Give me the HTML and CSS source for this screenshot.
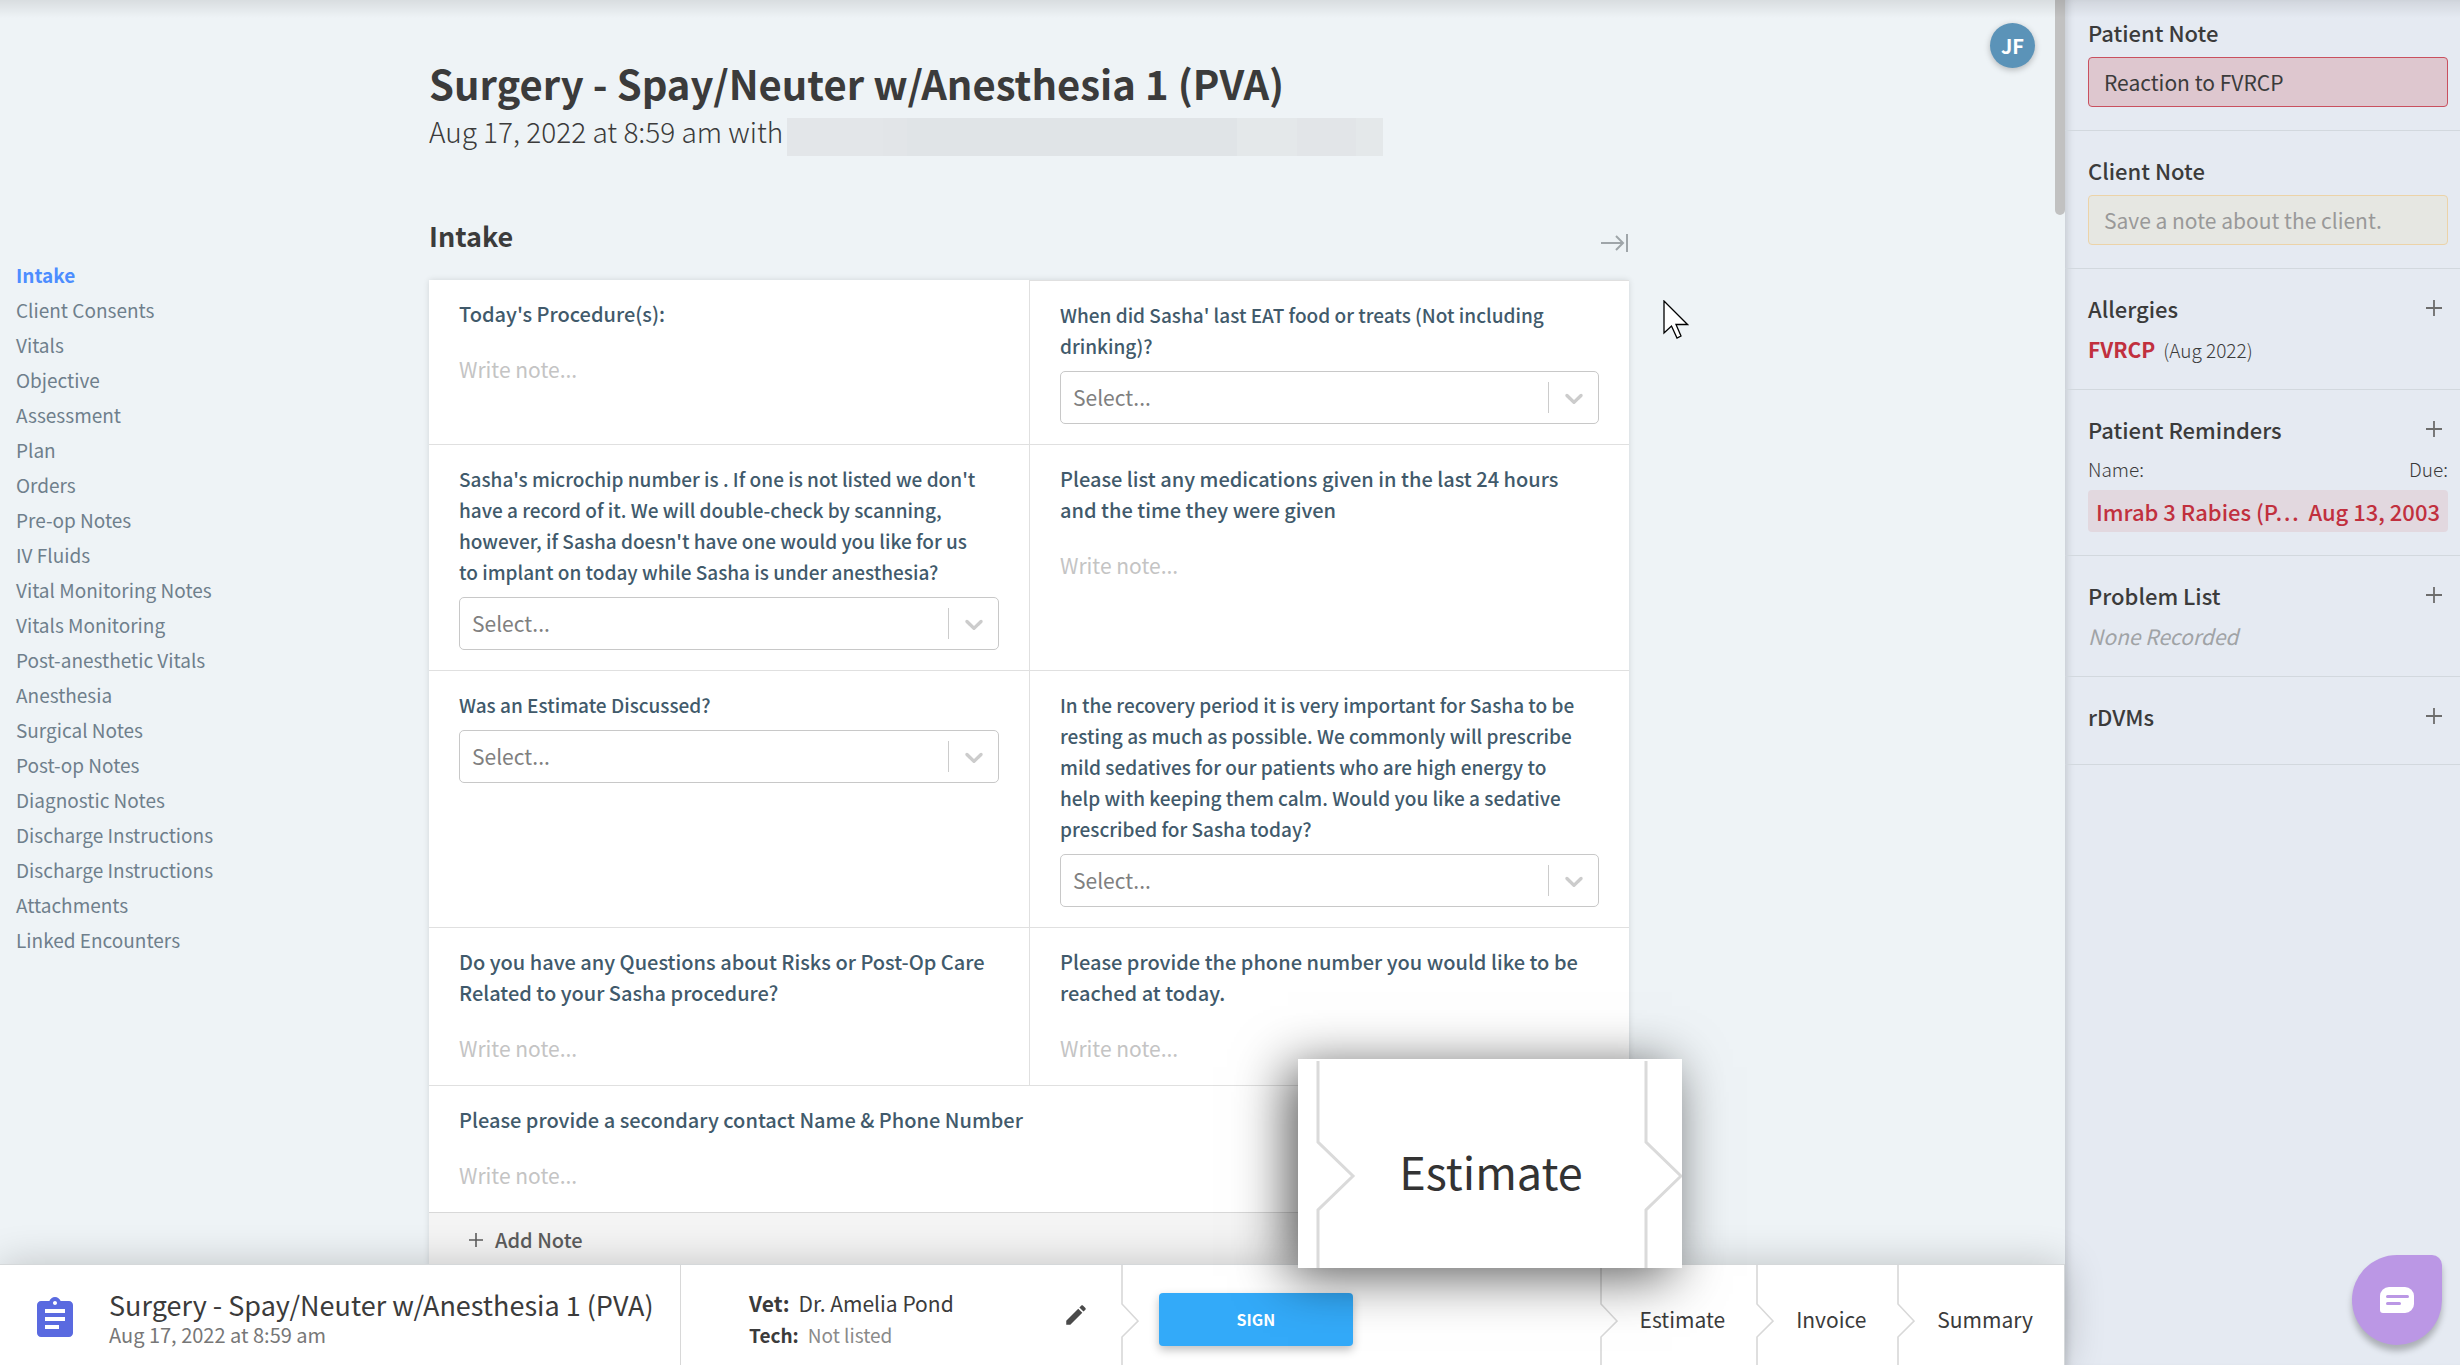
FILE: index.html
```html
<!DOCTYPE html>
<html lang="en">
  <head>
    <meta charset="UTF-8" />
    <meta name="viewport" content="width=device-width, initial-scale=1.0" />
    <title>Surgery - Spay/Neuter w/Anesthesia 1 (PVA)</title>
    <link rel="stylesheet" href="styles.css">
  </head>
  <body>
    <!-- shared icons -->
    <svg class="sprite" aria-hidden="true">
      <symbol id="plus" viewBox="0 0 16 16"><path d="M8 0V16M0 8H16" stroke="currentColor" stroke-width="1.8" /></symbol>
      <symbol id="chevron" viewBox="0 0 20 20"><path d="M4.516 7.548c.436-.446 1.043-.481 1.576 0L10 11.295l3.908-3.747c.533-.481 1.141-.446 1.574 0 .436.445.408 1.197 0 1.615-.406.418-4.695 4.502-4.695 4.502a1.095 1.095 0 0 1-1.576 0S4.924 9.581 4.516 9.163s-.436-1.17 0-1.615z" fill="currentColor" /></symbol>
      <symbol id="step" viewBox="0 0 18 100"><path d="M1 0V39L17 56L1 72V100" fill="none" stroke="currentColor" stroke-width="1.6" /></symbol>
    </svg>

    <div class="workspace">
      <div class="content">
        <nav class="sections">
          <a class="active" href="#intake">Intake</a>
          <a href="#">Client Consents</a>
          <a href="#">Vitals</a>
          <a href="#">Objective</a>
          <a href="#">Assessment</a>
          <a href="#">Plan</a>
          <a href="#">Orders</a>
          <a href="#">Pre-op Notes</a>
          <a href="#">IV Fluids</a>
          <a href="#">Vital Monitoring Notes</a>
          <a href="#">Vitals Monitoring</a>
          <a href="#">Post-anesthetic Vitals</a>
          <a href="#">Anesthesia</a>
          <a href="#">Surgical Notes</a>
          <a href="#">Post-op Notes</a>
          <a href="#">Diagnostic Notes</a>
          <a href="#">Discharge Instructions</a>
          <a href="#">Discharge Instructions</a>
          <a href="#">Attachments</a>
          <a href="#">Linked Encounters</a>
        </nav>

        <main class="encounter">
          <h1>Surgery - Spay/Neuter w/Anesthesia 1 (PVA)</h1>
          <p class="subtitle">Aug 17, 2022 at 8:59 am with <span class="redacted"></span></p>

          <div class="section-head">
            <h2 id="intake">Intake</h2>
            <button class="icon-btn collapse" aria-label="Collapse">
              <svg width="28" height="18" viewBox="0 0 28 18"><path d="M0 9H22M15 2L22 9L15 16M26 0V18" fill="none" stroke="currentColor" stroke-width="2" /></svg>
            </button>
          </div>

          <div class="card">
            <div class="cell">
              <label for="q1">Today's Procedure(s):</label>
              <textarea id="q1" rows="1" placeholder="Write note..."></textarea>
            </div>
            <div class="cell choice">
              <label for="q2">When did Sasha' last EAT food or treats (Not including drinking)?</label>
              <div class="select">
                <select id="q2"><option>Select...</option></select>
                <span class="arrow"><svg width="30" height="30"><use href="#chevron" /></svg></span>
              </div>
            </div>
            <div class="cell choice">
              <label for="q3">Sasha's microchip number is . If one is not listed we don't have a record of it. We will double-check by scanning, however, if Sasha doesn't have one would you like for us to implant on today while Sasha is under anesthesia?</label>
              <div class="select">
                <select id="q3"><option>Select...</option></select>
                <span class="arrow"><svg width="30" height="30"><use href="#chevron" /></svg></span>
              </div>
            </div>
            <div class="cell">
              <label for="q4">Please list any medications given in the last 24 hours and the time they were given</label>
              <textarea id="q4" rows="1" placeholder="Write note..."></textarea>
            </div>
            <div class="cell choice">
              <label for="q5">Was an Estimate Discussed?</label>
              <div class="select">
                <select id="q5"><option>Select...</option></select>
                <span class="arrow"><svg width="30" height="30"><use href="#chevron" /></svg></span>
              </div>
            </div>
            <div class="cell choice">
              <label for="q6">In the recovery period it is very important for Sasha to be resting as much as possible. We commonly will prescribe mild sedatives for our patients who are high energy to help with keeping them calm. Would you like a sedative prescribed for Sasha today?</label>
              <div class="select">
                <select id="q6"><option>Select...</option></select>
                <span class="arrow"><svg width="30" height="30"><use href="#chevron" /></svg></span>
              </div>
            </div>
            <div class="cell">
              <label for="q7">Do you have any Questions about Risks or Post-Op Care Related to your Sasha procedure?</label>
              <textarea id="q7" rows="1" placeholder="Write note..."></textarea>
            </div>
            <div class="cell">
              <label for="q8">Please provide the phone number you would like to be reached at today.</label>
              <textarea id="q8" rows="1" placeholder="Write note..."></textarea>
            </div>
            <div class="cell wide">
              <label for="q9">Please provide a secondary contact Name &amp; Phone Number</label>
              <textarea id="q9" rows="1" placeholder="Write note..."></textarea>
            </div>
            <button class="add-note"><svg width="14" height="14"><use href="#plus" /></svg>Add Note</button>
          </div>
        </main>

        <button class="avatar">JF</button>
        <div class="scroll-thumb"></div>
        <svg class="cursor" width="26" height="40" viewBox="0 0 26 40"><path d="M1 1V33L8.500 26L14 38L18 36L13 24.500H24.500Z" fill="#fff" stroke="#000" stroke-width="1.300" /></svg>
      </div>

      <footer class="bar">
        <div class="summary">
          <svg class="clipboard" width="48" height="48" viewBox="0 0 24 24"><path fill="currentColor" d="M19 3h-4.180C14.400 1.840 13.300 1 12 1c-1.300 0-2.400.84-2.820 2H5c-1.100 0-2 .9-2 2v14c0 1.100.9 2 2 2h14c1.100 0 2-.9 2-2V5c0-1.100-.9-2-2-2zm-7 0c.55 0 1 .45 1 1s-.45 1-1 1-1-.45-1-1 .45-1 1-1zm2 14H7v-2h7v2zm3-4H7v-2h10v2zm0-4H7V7h10v2z" /></svg>
          <div>
            <p class="summary-title">Surgery - Spay/Neuter w/Anesthesia 1 (PVA)</p>
            <p class="summary-date">Aug 17, 2022 at 8:59 am</p>
          </div>
        </div>
        <div class="staff">
          <dl>
            <div><dt>Vet:</dt><dd>Dr. Amelia Pond</dd></div>
            <div class="tech"><dt>Tech:</dt><dd>Not listed</dd></div>
          </dl>
          <button class="icon-btn edit" aria-label="Edit staff">
            <svg width="26" height="26" viewBox="0 0 24 24"><path fill="currentColor" d="M3 17.250V21h3.750L17.810 9.940l-3.750-3.750L3 17.250zM20.710 7.040c.39-.39.39-1.020 0-1.410l-2.340-2.340c-.39-.39-1.020-.39-1.410 0l-1.830 1.830 3.750 3.750 1.830-1.830z" /></svg>
          </button>
        </div>
        <div class="sign">
          <svg class="step" width="18" height="100"><use href="#step" /></svg>
          <button class="sign-btn">SIGN</button>
        </div>
        <nav class="tabs">
          <a href="#"><svg class="step" width="18" height="100"><use href="#step" /></svg><span>Estimate</span></a>
          <a href="#"><svg class="step" width="18" height="100"><use href="#step" /></svg><span>Invoice</span></a>
          <a href="#"><svg class="step" width="18" height="100"><use href="#step" /></svg><span>Summary</span></a>
        </nav>
      </footer>

      <div class="callout">
        <svg width="40" height="209" viewBox="0 0 40 209"><path d="M2 2V83L37 117L2 151V209" fill="none" stroke="currentColor" stroke-width="3" /></svg>
        <span>Estimate</span>
        <svg width="38" height="209" viewBox="0 0 38 209"><path d="M2 2V83L37 117L2 151V209" fill="none" stroke="currentColor" stroke-width="3" /></svg>
      </div>
    </div>

    <aside class="sidebar">
      <section>
        <div class="side-head"><h3><label for="patient-note">Patient Note</label></h3></div>
        <input class="alert" id="patient-note" type="text" value="Reaction to FVRCP">
      </section>
      <section>
        <div class="side-head"><h3><label for="client-note">Client Note</label></h3></div>
        <input class="note" id="client-note" type="text" placeholder="Save a note about the client.">
      </section>
      <section>
        <div class="side-head">
          <h3>Allergies</h3>
          <button class="icon-btn" aria-label="Add allergy"><svg width="16" height="16"><use href="#plus" /></svg></button>
        </div>
        <p class="allergy"><strong>FVRCP</strong> <span>(Aug 2022)</span></p>
      </section>
      <section>
        <div class="side-head">
          <h3>Patient Reminders</h3>
          <button class="icon-btn" aria-label="Add reminder"><svg width="16" height="16"><use href="#plus" /></svg></button>
        </div>
        <div class="columns"><span>Name:</span><span>Due:</span></div>
        <div class="reminder"><span class="name">Imrab 3 Rabies (P…</span><span>Aug 13, 2003</span></div>
      </section>
      <section>
        <div class="side-head">
          <h3>Problem List</h3>
          <button class="icon-btn" aria-label="Add problem"><svg width="16" height="16"><use href="#plus" /></svg></button>
        </div>
        <p class="none">None Recorded</p>
      </section>
      <section>
        <div class="side-head">
          <h3>rDVMs</h3>
          <button class="icon-btn" aria-label="Add rDVM"><svg width="16" height="16"><use href="#plus" /></svg></button>
        </div>
      </section>
      <button class="chat" aria-label="Chat">
        <svg width="34" height="26" viewBox="0 0 34 26"><path d="M9 0H25A9 9 0 0 1 34 9V17A9 9 0 0 1 25 26H3A3 3 0 0 1 0 23V9A9 9 0 0 1 9 0Z" fill="#fff" /><path d="M7.500 9.500H27.500M7.500 16.500H19.500" stroke="#bb97e5" stroke-width="3" stroke-linecap="round" /></svg>
      </button>
    </aside>
  </body>
</html>
```

FILE: styles.css
```css
* {
  margin: 0;
  padding: 0;
  box-sizing: border-box;
}

body {
  display: flex;
  height: 100vh;
  overflow: hidden;
  position: relative;
  font-family: "Source Sans Pro", "Noto Sans CJK SC", sans-serif;
  font-size: 20px;
  line-height: 31px;
  color: #3b3b3b;
  background: #eef3f6;
}

/* shade under the app header */
body::before {
  content: "";
  position: absolute;
  top: 0;
  left: 0;
  right: 0;
  height: 18px;
  background: linear-gradient(rgba(0, 0, 0, 0.09), rgba(0, 0, 0, 0));
  z-index: 5;
  pointer-events: none;
}

a {
  color: inherit;
  text-decoration: none;
}

button,
input,
select,
textarea {
  font: inherit;
  color: inherit;
}

.sprite {
  display: none;
}

.icon-btn {
  display: flex;
  border: none;
  background: none;
  color: #6d6d6d;
  cursor: pointer;
}

.workspace {
  flex: 1;
  min-width: 0;
  display: flex;
  flex-direction: column;
  position: relative;
}

.content {
  flex: 1;
  min-height: 0;
  overflow: hidden;
  position: relative;
  display: grid;
  grid-template-columns: 1fr minmax(0, 1200px) 1fr;
  align-items: start;
  padding-right: 7px;
}

.sections {
  display: flex;
  flex-direction: column;
  padding: 257px 0 0 16px;
  font-size: 19px;
  line-height: 35px;
  color: #6f7f8c;
}

.sections .active {
  color: #4c8dff;
  font-weight: 700;
}

.encounter {
  padding-top: 55px;
}

h1 {
  font-size: 40px;
  line-height: 56px;
  font-weight: 700;
}

.subtitle {
  display: flex;
  align-items: center;
  height: 40px;
  font-size: 28px;
  line-height: 40px;
  font-weight: 300;
}

.redacted {
  width: 596px;
  height: 38px;
  margin: 12px 0 0 4px;
  background: linear-gradient(90deg, #e3e6e9 0 96px, #e2e5e8 96px 120px, #e0e4e7 120px 450px, #e4e8ea 450px 510px, #e2e5e8 510px 569px, #e4e8ea 569px);
}

.section-head {
  display: flex;
  justify-content: space-between;
  align-items: center;
  margin: 65px 0 24px;
}

h2 {
  font-size: 27px;
  line-height: 40px;
  font-weight: 700;
}

.collapse {
  margin-top: 14px;
  color: #9fa5a9;
}

.card {
  display: grid;
  grid-template-columns: 1fr 1fr;
  background: #fff;
  box-shadow: 0 0 6px rgba(0, 0, 0, 0.12);
}

.cell {
  display: flex;
  flex-direction: column;
  padding: 18px 30px 20px;
  border-top: 1px solid #e0e0e0;
}

.cell:first-child {
  border-top: none;
}

.cell:nth-child(even) {
  border-left: 1px solid #e0e0e0;
}

.cell.wide {
  grid-column: span 2;
}

.cell label {
  font-weight: 500;
  color: #415a6b;
}

.cell.choice label {
  padding-right: 16px;
  font-size: 19px;
}

.cell textarea {
  display: block;
  height: 32px;
  margin-top: 25px;
  border: none;
  outline: none;
  resize: none;
  overflow: hidden;
  background: none;
  font-size: 21px;
}

.cell textarea::placeholder {
  color: #c4c4c4;
}

.select {
  position: relative;
  margin-top: 10px;
}

.select select {
  display: block;
  appearance: none;
  width: 100%;
  height: 53px;
  padding: 0 60px 0 12px;
  border: 1px solid #c8c8c8;
  border-radius: 5px;
  background: #fff;
  color: #808080;
  font-size: 21px;
}

.arrow {
  position: absolute;
  top: 11px;
  right: 1px;
  width: 50px;
  height: 31px;
  display: flex;
  align-items: center;
  justify-content: center;
  border-left: 1px solid #ccc;
  color: #ccc;
  pointer-events: none;
}

.add-note {
  grid-column: span 2;
  display: flex;
  align-items: center;
  gap: 12px;
  height: 54px;
  padding: 0 40px;
  border: none;
  border-top: 1px solid #d8d8d8;
  background: #f4f4f4;
  color: #5c5c5c;
  font-weight: 500;
}

.avatar {
  position: absolute;
  top: 23px;
  right: 30px;
  width: 45px;
  height: 45px;
  border: none;
  border-radius: 50%;
  background: #5b93b8;
  color: #fff;
  font-weight: 700;
  box-shadow: 0 2px 6px rgba(0, 0, 0, 0.25);
}

.scroll-thumb {
  position: absolute;
  top: 0;
  right: 0;
  width: 10px;
  height: 215px;
  border-radius: 0 0 5px 5px;
  background: #c1c1c1;
}

.cursor {
  position: absolute;
  top: 300px;
  left: 1663px;
}

/* bottom bar */
.bar {
  display: grid;
  grid-template-columns: 33% 439fr 478fr auto;
  height: 101px;
  position: relative;
  border-top: 1px solid #d5d8da;
  border-right: 1px solid #d5d8da;
  background: #fff;
  box-shadow: 0 0 40px rgba(0, 0, 0, 0.2);
}

.summary {
  display: flex;
  align-items: center;
  gap: 30px;
  padding: 8px 20px 0 31px;
  border-right: 1px solid #d8d8d8;
  white-space: nowrap;
}

.clipboard {
  color: #5a6ae0;
}

.summary-title {
  font-size: 27px;
  line-height: 32px;
}

.summary-date {
  line-height: 28px;
  color: #777;
}

.staff {
  display: flex;
  align-items: center;
  justify-content: space-between;
  padding: 0 32px 0 68px;
}

.staff dl {
  padding-top: 8px;
  font-size: 21px;
  line-height: 32px;
}

.staff dl > div {
  display: flex;
  gap: 9px;
}

.staff dt {
  font-weight: 700;
}

.staff .tech {
  font-size: 19px;
}

.staff .tech dd {
  color: #8a8a8a;
}

.edit {
  color: #4a4a4a;
}

.step {
  color: #d8d8d8;
}

.sign {
  display: flex;
  align-items: center;
  gap: 20px;
}

.sign-btn {
  width: 194px;
  height: 53px;
  margin-top: 9px;
  border: none;
  border-radius: 4px;
  background: #33aaf9;
  color: #fff;
  font-size: 16px;
  font-weight: 700;
  box-shadow: 0 4px 10px rgba(0, 0, 0, 0.25);
}

.tabs {
  display: flex;
  font-size: 21px;
}

.tabs a {
  display: flex;
  align-items: center;
  gap: 22px;
  padding-right: 31px;
}

.tabs span {
  padding-top: 8px;
}

/* enlarged view of the Estimate tab */
.callout {
  position: absolute;
  right: 383px;
  bottom: 97px;
  width: 384px;
  height: 209px;
  display: flex;
  align-items: center;
  justify-content: space-between;
  padding-left: 18px;
  background: #fff;
  color: #dadada;
  box-shadow: -10px 8px 50px rgba(0, 0, 0, 0.65);
}

.callout span {
  padding: 14px 18px 0 0;
  font-size: 45px;
  line-height: 60px;
  color: #333;
}

/* patient sidebar */
.sidebar {
  flex: 0 0 395px;
  min-width: 0;
  background: #e5eaf2;
  box-shadow: inset 8px 0 8px -6px rgba(0, 0, 0, 0.15);
  font-size: 21px;
}

.sidebar section {
  padding: 23px 12px 23px 23px;
  border-bottom: 1px solid #d2d8de;
}

.sidebar section:first-child {
  padding-top: 16px;
}

.side-head {
  display: flex;
  align-items: center;
  justify-content: space-between;
  margin-bottom: 9px;
  padding-right: 6px;
}

h3 {
  font-size: 22px;
  line-height: 32px;
  font-weight: 500;
}

.sidebar input {
  display: block;
  width: 100%;
  height: 50px;
  padding: 0 15px;
  border-radius: 4px;
}

.sidebar .alert {
  border: 1px solid #c9505f;
  background: #dec7cf;
}

.sidebar .note {
  border: 1px solid #ecd3a8;
  background: #e6e7e2;
}

.sidebar .note::placeholder {
  color: #999;
}

.allergy {
  display: flex;
  gap: 8px;
  line-height: 33px;
}

.allergy strong {
  color: #c1303e;
}

.allergy span {
  font-size: 19px;
  font-weight: 300;
}

.columns {
  display: flex;
  justify-content: space-between;
  margin-bottom: 6px;
  font-size: 19px;
  line-height: 30px;
  font-weight: 300;
}

.reminder {
  display: flex;
  justify-content: space-between;
  gap: 8px;
  padding: 0 8px;
  border-radius: 4px;
  background: #e2d8df;
  color: #c1303e;
  font-size: 22px;
  font-weight: 500;
  line-height: 42px;
  white-space: nowrap;
}

.reminder .name {
  overflow: hidden;
  text-overflow: ellipsis;
}

.none {
  line-height: 33px;
  font-style: italic;
  color: #a0a3a6;
}

.chat {
  position: absolute;
  right: 18px;
  bottom: 20px;
  width: 90px;
  height: 90px;
  display: flex;
  align-items: center;
  justify-content: center;
  border: none;
  border-radius: 45px 10px 45px 45px;
  background: #bb97e5;
  box-shadow: 0 6px 6px rgba(0, 0, 0, 0.25);
}
```
